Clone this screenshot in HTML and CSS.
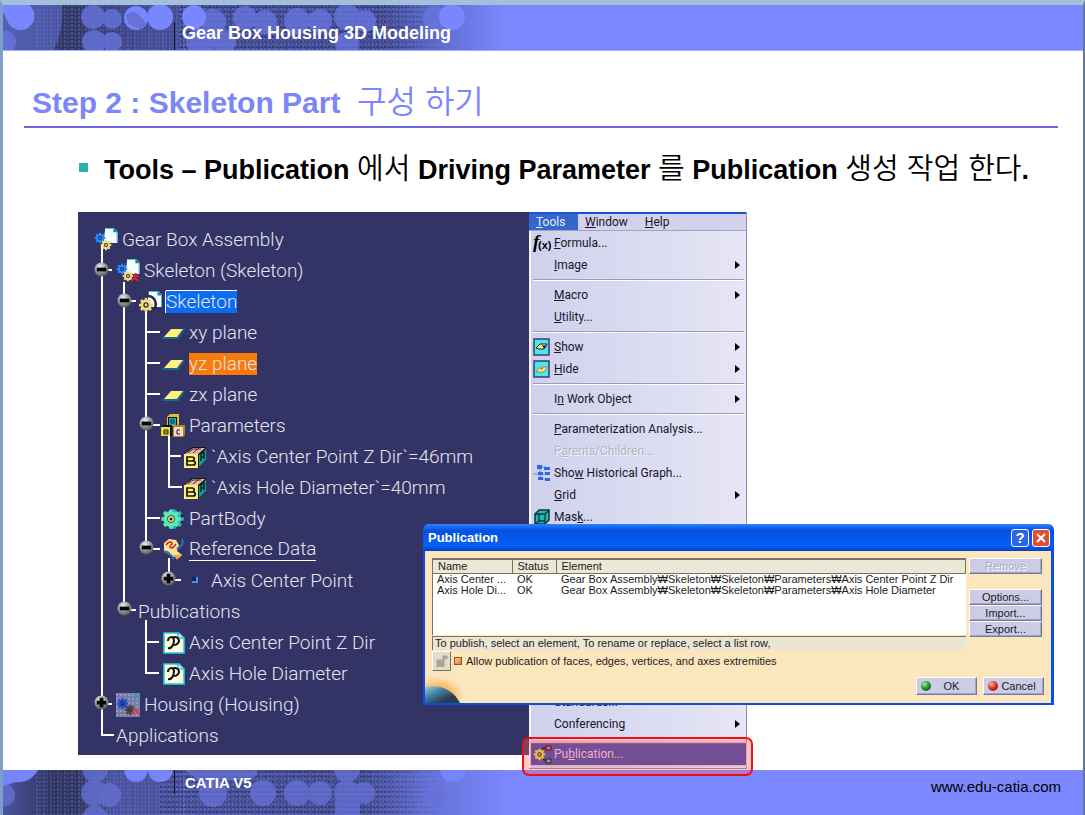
FILE: index.html
```html
<!DOCTYPE html>
<html lang="ko">
<head>
<meta charset="utf-8">
<title>Gear Box Housing 3D Modeling</title>
<link rel="stylesheet" href="styles.css">
</head>
<body>
<svg class="defs" aria-hidden="true">
  <defs>
    <linearGradient id="fade" x1="0" x2="1" y1="0" y2="0">
      <stop offset="0" stop-color="#5560b4"/><stop offset=".12" stop-color="#4a549f"/><stop offset=".14" stop-color="#343a6c"/>
      <stop offset=".3" stop-color="#444d92"/><stop offset=".76" stop-color="#414a90"/><stop offset=".84" stop-color="#5a66c4"/><stop offset="1" stop-color="#7987fd"/>
    </linearGradient>
    <linearGradient id="fade2" x1="0" x2="1" y1="0" y2="0">
      <stop offset="0" stop-color="#4b559f"/><stop offset=".1" stop-color="#30355f"/><stop offset=".15" stop-color="#31365f"/>
      <stop offset=".22" stop-color="#4a539b"/><stop offset=".72" stop-color="#414a8b"/><stop offset=".84" stop-color="#6470d4"/><stop offset="1" stop-color="#7987fd"/>
    </linearGradient>
    <linearGradient id="thin" x1="0" x2="1" y1="0" y2="0"><stop offset=".75" stop-color="#fff"/><stop offset="1" stop-color="#000"/></linearGradient>
    <mask id="thinning" maskContentUnits="objectBoundingBox"><rect width="1" height="1" fill="url(#thin)"/></mask>
    <pattern id="vdots" width="7" height="4" patternUnits="userSpaceOnUse"><path d="M2 0v3M5 1v2" stroke="#7c88ee" stroke-width="1" opacity=".5"/></pattern>
    <pattern id="hdots" width="4" height="5" patternUnits="userSpaceOnUse"><path d="M0 2h3" stroke="#252b58" stroke-width="1.4" opacity=".65"/><path d="M0 4h2" stroke="#8590f0" opacity=".4"/></pattern>
    <radialGradient id="ball" cx=".4" cy=".3" r=".8"><stop offset="0" stop-color="#eee"/><stop offset=".5" stop-color="#999"/><stop offset="1" stop-color="#444"/></radialGradient>
    <radialGradient id="sun" cx=".4" cy=".7" r=".6"><stop offset="0" stop-color="#f49a2a"/><stop offset=".6" stop-color="#fbc878"/><stop offset="1" stop-color="#fbe6bd" stop-opacity="0"/></radialGradient>
    <linearGradient id="globe" x1="0" x2="1" y1="0" y2="1"><stop offset="0" stop-color="#9bd0ea"/><stop offset=".35" stop-color="#4580a0"/><stop offset=".7" stop-color="#2c3c50"/></linearGradient>
    <symbol id="page" viewBox="0 0 16 16"><path d="M3 0h9l4 4v12H1z" fill="#f4ffff"/><path d="M3 .5h9l3.500 4V16" fill="none" stroke="#35c6d2" stroke-width="1"/><path d="M11.500 0v4.500H16z" fill="#0d8c9c"/></symbol>
    <symbol id="gear" viewBox="0 0 16 16"><path d="M8 1v14M1 8h14M3 3l10 10M13 3L3 13" stroke="currentColor" stroke-width="2.600"/><circle cx="8" cy="8" r="4.200" fill="none" stroke="currentColor" stroke-width="2.600"/><circle cx="8" cy="8" r="2.700" fill="#2b2b50"/><circle cx="8" cy="8" r="1.400" fill="currentColor"/></symbol>
    <symbol id="product" viewBox="0 0 24 24"><use href="#page" x="8" y="0" width="16" height="15"/><g color="#1f8bff"><use href="#gear" x="0" y="4" width="12" height="12"/></g><g color="#f3dc7c"><use href="#gear" x="6" y="11" width="12" height="12"/></g></symbol>
    <symbol id="subproduct" viewBox="0 0 24 24"><use href="#product" width="24" height="24"/><path d="M15 22l4-3 1-5M18 19l5 3M19 15l3 3" fill="none" stroke="#e81c24" stroke-width="2"/></symbol>
    <symbol id="part" viewBox="0 0 24 24"><use href="#page" x="8" y="0" width="16" height="18"/><path d="M10 6a8 8 0 0 1 5 14" stroke="#26264a" stroke-width="2.500" fill="none"/><g color="#f6dc74"><use href="#gear" x="0" y="7" width="16" height="16"/></g></symbol>
    <symbol id="plane" viewBox="0 0 24 24"><path d="M1 17h16l6-9-6 9H1z" fill="#082030" stroke="#17688a" stroke-width="2"/><path d="M3 16L10 8h12l-6 8z" fill="#fff27c"/></symbol>
    <symbol id="cube" viewBox="0 0 24 24"><path d="M1 9l8-7h14v14l-8 7H1z" fill="#161616"/><path d="M2 9l8-6h12l-7 6z" fill="#eeb9a8"/><path d="M5 8l5-4h8M10 8l6-5" fill="none" stroke="#48302c"/><path d="M16 10l7-6v11l-7 7z" fill="#159b9b"/><path d="M18 16V9l3-2v7M18 13l3-2" stroke="#102020" stroke-width="1.500" fill="none"/><path d="M1 9h14v14H1z" fill="#ffec78"/><path d="M4 12v8h6c3 0 3-4 0-4H4h5c3 0 3-4 0-4z" fill="none" stroke="#151515" stroke-width="1.700"/></symbol>
    <symbol id="blocks" viewBox="0 0 24 24"><path d="M6 3l3-3h9v10l-2 2H6z" fill="#e0c030"/><path d="M7 3h9v8H7z" fill="#111"/><path d="M8 4h7v7H8z" fill="#23a7b3"/><path d="M10 6h3v3h-3z" fill="none" stroke="#123"/><path d="M0 13l3-2h8v11H0z" fill="#111"/><path d="M0 13h9v9H0z" fill="#ede234"/><path d="M3 16h4v4H3zM3 18h4" fill="none" stroke="#222"/><path d="M12 13l2-2h10v10l-2 2H12z" fill="#a98a20"/><path d="M13 13h9v9h-9z" fill="#ffd4cc"/><path d="M19 16h-3v4h3" fill="none" stroke="#222"/></symbol>
    <symbol id="body" viewBox="0 0 24 24"><circle cx="14" cy="12" r="8" fill="#111"/><g color="#2bb6d0"><use href="#gear" x="2" y="0" width="22" height="24"/></g><g color="#5fe8b0"><use href="#gear" x="-1" y="0" width="22" height="24"/></g><circle cx="10" cy="12" r="3" fill="#e9f05c"/><circle cx="10" cy="12" r="1.500" fill="#117"/></symbol>
    <symbol id="geoset" viewBox="0 0 24 24"><path d="M3 5l5-4 7 1 3 5-2 6 5 4-3 3-8-2-7-5z" fill="#ffe29a"/><path d="M5 7c3-5 8-3 5 0s1 5 5-1" fill="none" stroke="#c42b1c" stroke-width="1.500"/><path d="M3 14c5-2 5 3 8 4l2 3M21 1c3 6-3 8-5 10" fill="none" stroke="#227ca4" stroke-width="2"/><path d="M13 17l8-1-5 6z" fill="#f0a63c"/></symbol>
    <symbol id="point" viewBox="0 0 24 24"><path d="M14 8v5H9" fill="none" stroke="#2f9cf0" stroke-width="2"/><path d="M9 8h4v4H9z" fill="#152060"/></symbol>
    <symbol id="pub" viewBox="0 0 24 24"><path d="M3 2h15l5 5v15H3z" fill="#fffce0" stroke="#27cfd8" stroke-width="1.600"/><path d="M17 2v5h5" fill="#cfeff0" stroke="#1898b0"/><path d="M7 10c0-5 6-5 6-1s-2 9-6 8M11 7c6-3 9 3 5 6-1 1-3 1-4 0" fill="none" stroke="#111" stroke-width="2"/></symbol>
    <symbol id="housing" viewBox="0 0 24 24"><path d="M0 0h24v24H0z" fill="#777da6"/><path d="M0 2h24M0 6h24M0 10h24M0 14h24M0 18h24M0 22h24" stroke="#b0b4cc" stroke-dasharray="2 2"/><path d="M16 1h4l4 4v10" fill="none" stroke="#2fa7bd" stroke-width="2"/><g color="#2450c8"><use href="#gear" x="0" y="4" width="13" height="13"/></g><g color="#4d4a48"><use href="#gear" x="8" y="11" width="12" height="12"/></g><path d="M15 22l4-6 4 6M17 16l6 1" fill="none" stroke="#d73a4c" stroke-width="1.500"/></symbol>
    <symbol id="minus" viewBox="0 0 16 16"><circle cx="8" cy="8" r="7.500" fill="url(#ball)"/><path d="M3 6h10v4H3z" fill="#050505"/></symbol>
    <symbol id="plus" viewBox="0 0 16 16"><circle cx="8" cy="8" r="7.500" fill="url(#ball)"/><path d="M6 3h4v3h3v4h-3v3H6v-3H3V6h3z" fill="#050505"/></symbol>
  </defs>
</svg>

<div class="slide">
  <header class="banner">
    <svg class="art" width="500" height="45" viewBox="3 5 500 45" aria-hidden="true">
      <rect x="3" y="5" width="500" height="45" fill="url(#fade)"/>
      <path d="M62 5h20v45H54q10-20 8-45z" fill="#323763"/>
      <rect x="36" y="5" width="150" height="45" fill="url(#vdots)"/>
      <g mask="url(#thinning)"><rect x="180" y="5" width="275" height="45" fill="url(#hdots)"/><rect x="180" y="5" width="275" height="45" fill="url(#vdots)"/></g>
      <g fill="#6976e2" opacity=".75">
        <circle cx="93" cy="17" r="12"/><circle cx="94" cy="42" r="12"/><circle cx="112" cy="19" r="10"/><circle cx="112" cy="42" r="10"/>
        <circle cx="245" cy="18" r="12"/><circle cx="213" cy="22" r="13"/><circle cx="200" cy="42" r="14"/><circle cx="224" cy="42" r="12"/><circle cx="265" cy="22" r="12"/>
        <circle cx="297" cy="21" r="13"/><circle cx="320" cy="21" r="12"/><circle cx="347" cy="17" r="13"/><circle cx="365" cy="21" r="11"/><circle cx="347" cy="44" r="12"/>
        <circle cx="5" cy="42" r="11"/><circle cx="435" cy="18" r="12"/>
      </g>
      <g fill="#7886ff"><path d="M3 5h26a14 14 0 1 1-22 15l-4-8z"/><circle cx="136" cy="18" r="12"/><circle cx="160" cy="17" r="13"/><circle cx="194" cy="17" r="12"/><circle cx="452" cy="17" r="13"/></g>
      <path d="M126 14q12-6 20 10l-5 5q-15-2-15-15z" fill="#6672d6"/>
      <path d="M174.500 22v28" stroke="#101020"/>
    </svg>
    <p class="course">Gear Box Housing 3D Modeling</p>
  </header>

  <main class="content">
    <h1 class="title">Step 2 : Skeleton Part &nbsp;<span class="kr">구성 하기</span></h1>
    <ul class="bullets"><li><span>Tools – Publication <span class="kr">에서</span> Driving Parameter <span class="kr">를</span> Publication <span class="kr">생성 작업 한다</span>.</span></li></ul>

    <div class="figure">
      <section class="tree" aria-label="Specification tree">
        <svg class="wires" width="130" height="543" viewBox="0 0 130 543" aria-hidden="true">
          <g fill="none" stroke="#fff" stroke-width="2">
            <path d="M24 34v489h12M24 58h10M24 492h10M46 70v328M46 89h12M46 398h12M68 98v238M68 120h14M68 151h14M68 182h14M68 213h14M68 306h14M68 337h14M91 222v53h13M91 244h12M91 346v22h12M68 408v53h13M68 430h13"/>
          </g>
          <use href="#minus" x="16" y="50" width="15" height="15"/><use href="#minus" x="39" y="81" width="15" height="15"/>
          <use href="#minus" x="61" y="204" width="15" height="15"/><use href="#minus" x="61" y="328" width="15" height="15"/>
          <use href="#plus" x="83" y="359" width="15" height="15"/><use href="#minus" x="39" y="389" width="15" height="15"/><use href="#plus" x="16" y="483" width="15" height="15"/>
        </svg>
        <ul class="nodes">
          <li class="l0"><svg><use href="#product"/></svg><span>Gear Box Assembly</span></li>
          <li class="l1"><svg><use href="#subproduct"/></svg><span>Skeleton (Skeleton)</span></li>
          <li class="l2"><svg><use href="#part"/></svg><span class="picked">Skeleton</span></li>
          <li class="l3"><svg><use href="#plane"/></svg><span>xy plane</span></li>
          <li class="l3"><svg><use href="#plane"/></svg><span class="hot">yz plane</span></li>
          <li class="l3"><svg><use href="#plane"/></svg><span>zx plane</span></li>
          <li class="l3"><svg><use href="#blocks"/></svg><span>Parameters</span></li>
          <li class="l4"><svg><use href="#cube"/></svg><span>`Axis Center Point Z Dir`=46mm</span></li>
          <li class="l4"><svg><use href="#cube"/></svg><span>`Axis Hole Diameter`=40mm</span></li>
          <li class="l3"><svg><use href="#body"/></svg><span>PartBody</span></li>
          <li class="l3"><svg><use href="#geoset"/></svg><span class="current">Reference Data</span></li>
          <li class="l4"><svg><use href="#point"/></svg><span>Axis Center Point</span></li>
          <li class="l2"><span>Publications</span></li>
          <li class="l3"><svg><use href="#pub"/></svg><span>Axis Center Point Z Dir</span></li>
          <li class="l3"><svg><use href="#pub"/></svg><span>Axis Hole Diameter</span></li>
          <li class="l1"><svg><use href="#housing"/></svg><span>Housing (Housing)</span></li>
          <li class="l1"><span>Applications</span></li>
        </ul>
      </section>

      <section class="menu" aria-label="Tools menu">
        <nav class="menubar"><button class="open"><u>T</u>ools</button><button><u>W</u>indow</button><button><u>H</u>elp</button></nav>
        <ul class="items">
          <li><button><svg viewBox="0 0 18 18"><text class="fx" x="0" y="14">f</text><text class="fx-arg" x="5" y="15">(x)</text></svg><span><u>F</u>ormula...</span></button></li>
          <li><button class="sub"><i></i><span><u>I</u>mage</span></button></li>
          <li class="sep"></li>
          <li><button class="sub"><i></i><span><u>M</u>acro</span></button></li>
          <li><button><i></i><span><u>U</u>tility...</span></button></li>
          <li class="sep"></li>
          <li><button class="sub"><svg viewBox="0 0 18 18"><path d="M1 1h15v16H1z" fill="#4de6f0" stroke="#3b3b78" stroke-width="1.500"/><path d="M3 10l4-4h7l-3 5H6z" fill="#ffe873" stroke="#222"/><path d="M9 7l5 1-3 3z" fill="#226"/></svg><span><u>S</u>how</span></button></li>
          <li><button class="sub"><svg viewBox="0 0 18 18"><path d="M1 1h15v16H1z" fill="#4de6f0" stroke="#3b3b78" stroke-width="1.500"/><path d="M3 12l4-5h7l-3 5z" fill="#ffe873" stroke="#a88440"/><path d="M7 9l3-1" stroke="#864"/></svg><span><u>H</u>ide</span></button></li>
          <li class="sep"></li>
          <li><button class="sub"><i></i><span>I<u>n</u> Work Object</span></button></li>
          <li class="sep"></li>
          <li><button><i></i><span><u>P</u>arameterization Analysis...</span></button></li>
          <li><button disabled><i></i><span>P<u>a</u>rents/Children...</span></button></li>
          <li><button><svg viewBox="0 0 18 18"><path d="M0 10h16M7 3v12M7 3h6M7 15h8" fill="none" stroke="#4b9ce4"/><path d="M4 1h5v4H4zM11 3h6v3h-6zM5 8h5v3H5zM12 8h5v3h-5zM5 13h5v3H5zM12 14h5v3h-5z" fill="#3464ea"/></svg><span>Sho<u>w</u> Historical Graph...</span></button></li>
          <li><button class="sub"><i></i><span><u>G</u>rid</span></button></li>
          <li><button><svg viewBox="0 0 18 18"><path d="M2 6l4-4h10v10l-4 4H2z" fill="#27b6b6" stroke="#083838" stroke-width="1.500"/><path d="M2 6h10v10M12 6l4-4M6 6v7h6M6 13l-4 3" fill="none" stroke="#083838" stroke-width="1.300"/></svg><span>Mas<u>k</u>...</span></button></li>
          <li class="covered"></li>
          <li><button><i></i><span>Standards...</span></button></li>
          <li><button class="sub"><i></i><span>Conferencing</span></button></li>
          <li class="sep"></li>
          <li class="chosen"><button><svg viewBox="0 0 18 18"><g color="#f0c84e"><use href="#gear" x="0" y="3" width="13" height="13"/></g><path d="M9 4l4-2M10 14l3 2" stroke="#222" stroke-width="1.500"/><path d="M13 1h5v4h-5z" fill="#f06a50" stroke="#311"/><path d="M13 14h5v4h-5z" fill="#58b8a0" stroke="#123"/></svg><span>Pu<u>b</u>lication...</span></button></li>
        </ul>
      </section>

      <section class="dialog" role="dialog" aria-labelledby="dlg-title">
        <header class="dlg-head"><h2 id="dlg-title">Publication</h2><button class="help" aria-label="Help">?</button><button class="close" aria-label="Close"><svg viewBox="0 0 12 12"><path d="M2 2l8 8M10 2l-8 8" stroke="#fff" stroke-width="2.200"/></svg></button></header>
        <div class="dlg-body">
          <div class="list">
            <div class="scroll">
              <table>
                <thead><tr><th class="c-name">Name</th><th class="c-status">Status</th><th>Element</th></tr></thead>
                <tbody>
                  <tr><td>Axis Center ...</td><td>OK</td><td>Gear Box Assembly₩Skeleton₩Skeleton₩Parameters₩Axis Center Point Z Dir</td></tr>
                  <tr><td>Axis Hole Di...</td><td>OK</td><td>Gear Box Assembly₩Skeleton₩Skeleton₩Parameters₩Axis Hole Diameter</td></tr>
                </tbody>
              </table>
            </div>
            <p class="hint">To publish, select an element, To rename or replace, select a list row,</p>
          </div>
          <div class="side"><button class="btn remove" disabled>Remove</button><button class="btn">Options...</button><button class="btn">Import...</button><button class="btn">Export...</button></div>
        </div>
        <div class="allow">
          <button class="lock" aria-label="Lock"><svg viewBox="0 0 12 12"><path d="M1 5h7v7H1zM7 5V1h4v3" fill="#a9a698" stroke="#a9a698"/></svg></button>
          <input type="checkbox" id="allow"><label for="allow">Allow publication of faces, edges, vertices, and axes extremities</label>
        </div>
        <svg class="corner" viewBox="0 0 46 34" aria-hidden="true"><ellipse cx="18" cy="20" rx="24" ry="19" fill="url(#sun)"/><path d="M0 18q24-4 35 16H0z" fill="url(#globe)"/></svg>
        <footer class="actions"><button class="btn"><i class="dot ok"></i><span>OK</span></button><button class="btn"><i class="dot no"></i><span>Cancel</span></button></footer>
      </section>
    </div>
  </main>

  <footer class="banner foot">
    <svg class="art" width="500" height="45" viewBox="3 770 500 45" aria-hidden="true">
      <rect x="3" y="770" width="500" height="45" fill="url(#fade2)"/>
      <rect x="36" y="770" width="150" height="45" fill="url(#vdots)"/>
      <g mask="url(#thinning)"><rect x="160" y="770" width="285" height="45" fill="url(#hdots)"/><rect x="180" y="770" width="265" height="45" fill="url(#vdots)"/></g>
      <g fill="#6672d8" opacity=".75">
        <path d="M82 770h26q-2 12-13 12t-13-12z"/><circle cx="94" cy="793" r="13"/><circle cx="109" cy="795" r="12"/><path d="M82 815q12-20 26 0z"/>
        <circle cx="213" cy="793" r="14"/><circle cx="263" cy="793" r="13"/><circle cx="297" cy="793" r="13"/><circle cx="320" cy="793" r="12"/>
        <path d="M334 770h26q-2 12-13 12t-13-12z"/><circle cx="347" cy="793" r="13"/><circle cx="364" cy="793" r="11"/><rect x="335" y="798" width="25" height="17"/>
        <circle cx="4" cy="795" r="11"/><circle cx="434" cy="795" r="11"/><path d="M184 770h74q-4 14-20 10h-40z"/>
      </g>
      <g fill="#7785fb"><path d="M3 770h35q-8 14-22 12l-13 4zM124 770h24q-2 12-12 12t-12-12zM148 770h25q-2 12-13 12t-12-12zM440 770h26q-2 12-13 12t-13-12z"/></g>
      <path d="M174.500 770v24" stroke="#101020"/>
    </svg>
    <p class="product">CATIA V5</p>
    <a class="site" href="#">www.edu-catia.com</a>
  </footer>
</div>
</body>
</html>
```
FILE: styles.css
```css
* { box-sizing: border-box; }
body { margin: 0; font-family: "Liberation Sans", "Noto Sans CJK KR", sans-serif; background: #fff; }
h1, h2, p, ul { margin: 0; padding: 0; }
ul { list-style: none; }
button { font: inherit; color: inherit; margin: 0; padding: 0; border: 0; background: none; cursor: pointer; }
.defs { display: block; width: 0; height: 0; }

.slide {
  display: flex; flex-direction: column; min-height: 100vh;
  border-style: solid; border-width: 5px 2px 0 3px;
  border-color: #a3bfd9 #62799c #a3bfd9 #7c9fc9;
}
.banner { display: grid; grid-template-columns: 1fr auto; background: #7b88ff; color: #fff; font-weight: bold; border-bottom: 1px solid #a4adff; }
.banner > * { grid-row: 1; grid-column: 1; }
.art { display: block; max-width: 100%; }
.course { padding: 18px 0 0 179px; font-size: 18px; line-height: 21px; }
.foot { border: 0; }
.product { padding: 4px 0 0 182px; font-size: 15px; line-height: 18px; }
.banner .site { grid-column: 2; padding: 8px 22px 0 0; font-size: 15px; line-height: 18px; font-weight: normal; color: #000; text-decoration: none; }

.content { flex: 1; }
.title { height: 45px; margin: 32px 25px 0 21px; padding: 0 8px; border-bottom: 2px solid #6f66e4; font-size: 30px; line-height: 36px; color: #7b86f8; }
.kr { font-family: "Noto Sans CJK KR", sans-serif; font-weight: 350; line-height: 1; }
.title .kr { font-size: 32px; }
.bullets { padding: 24px 20px 25px 76px; }
.bullets li { display: flex; align-items: center; gap: 16px; height: 35px; font-size: 27px; line-height: 33px; font-weight: bold; color: #000; white-space: nowrap; }
.bullets .kr { font-size: 29px; }
.bullets li::before { content: ""; width: 9px; height: 9px; margin-bottom: 4px; background: #2cb2ae; }

.figure { position: relative; display: grid; grid-template-columns: minmax(0, 451px) 218px; align-items: start; margin-left: 75px; }
.tree { display: grid; background: #333366; color: #e4e4ee; }
.wires, .nodes { grid-area: 1 / 1; }
.nodes { padding: 12px 0 4px; font-family: Roboto, sans-serif; font-weight: 300; font-size: 19px; line-height: 22px; }
.nodes li { display: flex; align-items: center; gap: 4px; height: 31px; white-space: nowrap; }
.nodes svg { width: 24px; height: 24px; flex: none; }
.l0 { padding-left: 16px; }
.l1 { padding-left: 38px; }
.l2 { padding-left: 60px; }
.l3 { padding-left: 83px; }
.l4 { padding-left: 105px; }
.picked { background: #0a6cf0; box-shadow: 0 -1px #fff, -1px 0 #fff; }
.hot { background: #f87a08; }
.current { border-bottom: 1px solid #fff; }

.menu { border: solid #8f90a8; border-width: 0 1px 1px 0; background: linear-gradient(90deg, #cfd0ec, #e6e6f6); font-family: Roboto, sans-serif; font-size: 12px; line-height: 16px; color: #161628; }
.menubar { display: flex; border-top: 2px solid #1e50d0; border-bottom: 1px solid #a4a4b8; background: #d2d2ec; }
.menubar button { padding: 0 7px; margin-right: 3px; text-align: left; }
.menubar button.open { width: 49px; margin: 0; background: #3566cc; color: #e8ecfa; }
.items { padding: 1px 0 3px; border-left: 2px solid #f4f4fc; }
.items button { display: flex; align-items: center; gap: 3px; width: 100%; height: 22px; padding: 0 6px 0 2px; text-align: left; }
.items button > svg, .items button > i { width: 18px; height: 18px; flex: none; overflow: visible; }
.items button > span { flex: 1; }
.items button:disabled { color: #b4b4c4; text-shadow: 1px 1px #f4f4f8; }
.sub::after { content: ""; border: solid transparent; border-width: 4px 0 4px 5px; border-left-color: #000; }
.sep { height: 8px; padding: 3px 2px 0; }
.sep::before { content: ""; display: block; border-top: 1px solid #9c9cb2; border-bottom: 1px solid #fff; }
.covered { height: 163px; }
.fx { font: italic bold 19px "Liberation Serif", serif; fill: #000; }
.fx-arg { font: bold 11px "Liberation Sans", sans-serif; fill: #000; }
.chosen { position: relative; }
.chosen button { background: #5b53a2; color: #f0c0dc; outline: 1px solid #efb8c4; }
.chosen::after { content: ""; position: absolute; inset: -6px -7px -11px -9px; border: 2px solid #f40d14; border-radius: 7px; background: rgba(255, 60, 70, .14); box-shadow: inset 0 0 0 5px rgba(255, 120, 120, .25); pointer-events: none; }

.dialog { position: absolute; left: 345px; top: 312px; width: 631px; border: solid #0c4fe0; border-width: 0 3px 2px 2px; border-radius: 6px 6px 0 0; background: #fbe6bd; font-size: 11px; line-height: 12px; color: #1c1c1c; }
.dlg-head { display: flex; align-items: center; gap: 3px; height: 27px; margin: 0 -2px; padding: 0 3px 0 5px; border-radius: 6px 6px 0 0; background: linear-gradient(#2a80ff, #0450e0 25%, #0560fa 80%, #0342c4); color: #fff; }
.dlg-head h2 { flex: 1; font-size: 13px; line-height: 16px; }
.help, .close { width: 18px; height: 18px; border: 1px solid #fff; border-radius: 3px; background: #2c66e4; font-size: 15px; line-height: 15px; font-weight: bold; }
.close { display: grid; place-items: center; background: #e05030; }
.close svg { width: 12px; height: 12px; }
.dlg-body { display: grid; grid-template-columns: minmax(0, 1fr) 73px; gap: 3px; padding: 7px 9px 0 7px; }
.scroll { height: 77px; border: solid #77745e; border-width: 2px 0 0 1px; background: #fff; }
table { width: 100%; border-collapse: collapse; table-layout: fixed; }
th { height: 13px; padding: 0 5px; border: solid #77745e; border-width: 0 1px 1px 0; background: #ece8d6; font-weight: normal; text-align: left; line-height: 12px; }
td { padding: 0 5px; line-height: 11px; white-space: nowrap; }
td:first-child { padding-left: 4px; }
.c-name { width: 79px; }
.c-status { width: 44px; }
.hint { margin-top: 1px; height: 14px; padding-left: 2px; border: solid #77745e; border-width: 1px 0 0 1px; background: #ebe6d4; }
.side { display: flex; flex-direction: column; }
.btn { height: 16px; border: 1px solid; border-color: #fff #77779a #77779a #fff; background: #cccce6; box-shadow: inset -1px -1px #a4a4c4; line-height: 13px; }
.btn:disabled { color: #a9a9bd; text-shadow: 1px 1px #fff; }
.remove { margin-bottom: 15px; }
.allow { display: flex; align-items: center; gap: 3px; padding: 1px 7px 0; }
.lock { display: grid; place-items: center; width: 19px; height: 20px; border: 1px solid; border-color: #fff #77745e #77745e #fff; background: #e2dccb; }
.lock svg { width: 12px; height: 12px; }
.allow input { appearance: none; width: 8px; height: 8px; margin: 0 1px 0 0; border: 1px solid #985020; background: linear-gradient(135deg, #ffd09a, #e4772a); }
.corner { position: absolute; left: 0; bottom: 0; width: 46px; height: 34px; }
.actions { display: flex; justify-content: flex-end; gap: 6px; padding: 6px 7px 8px; }
.actions .btn { display: flex; align-items: center; width: 61px; height: 18px; padding: 0 4px; }
.actions .btn span { flex: 1; text-align: center; }
.dot { width: 10px; height: 10px; border-radius: 50%; }
.ok { background: radial-gradient(circle at 35% 30%, #b0f090, #149020 50%, #0a4c10); }
.no { background: radial-gradient(circle at 35% 30%, #ffb090, #d82820 50%, #701010); }
```
